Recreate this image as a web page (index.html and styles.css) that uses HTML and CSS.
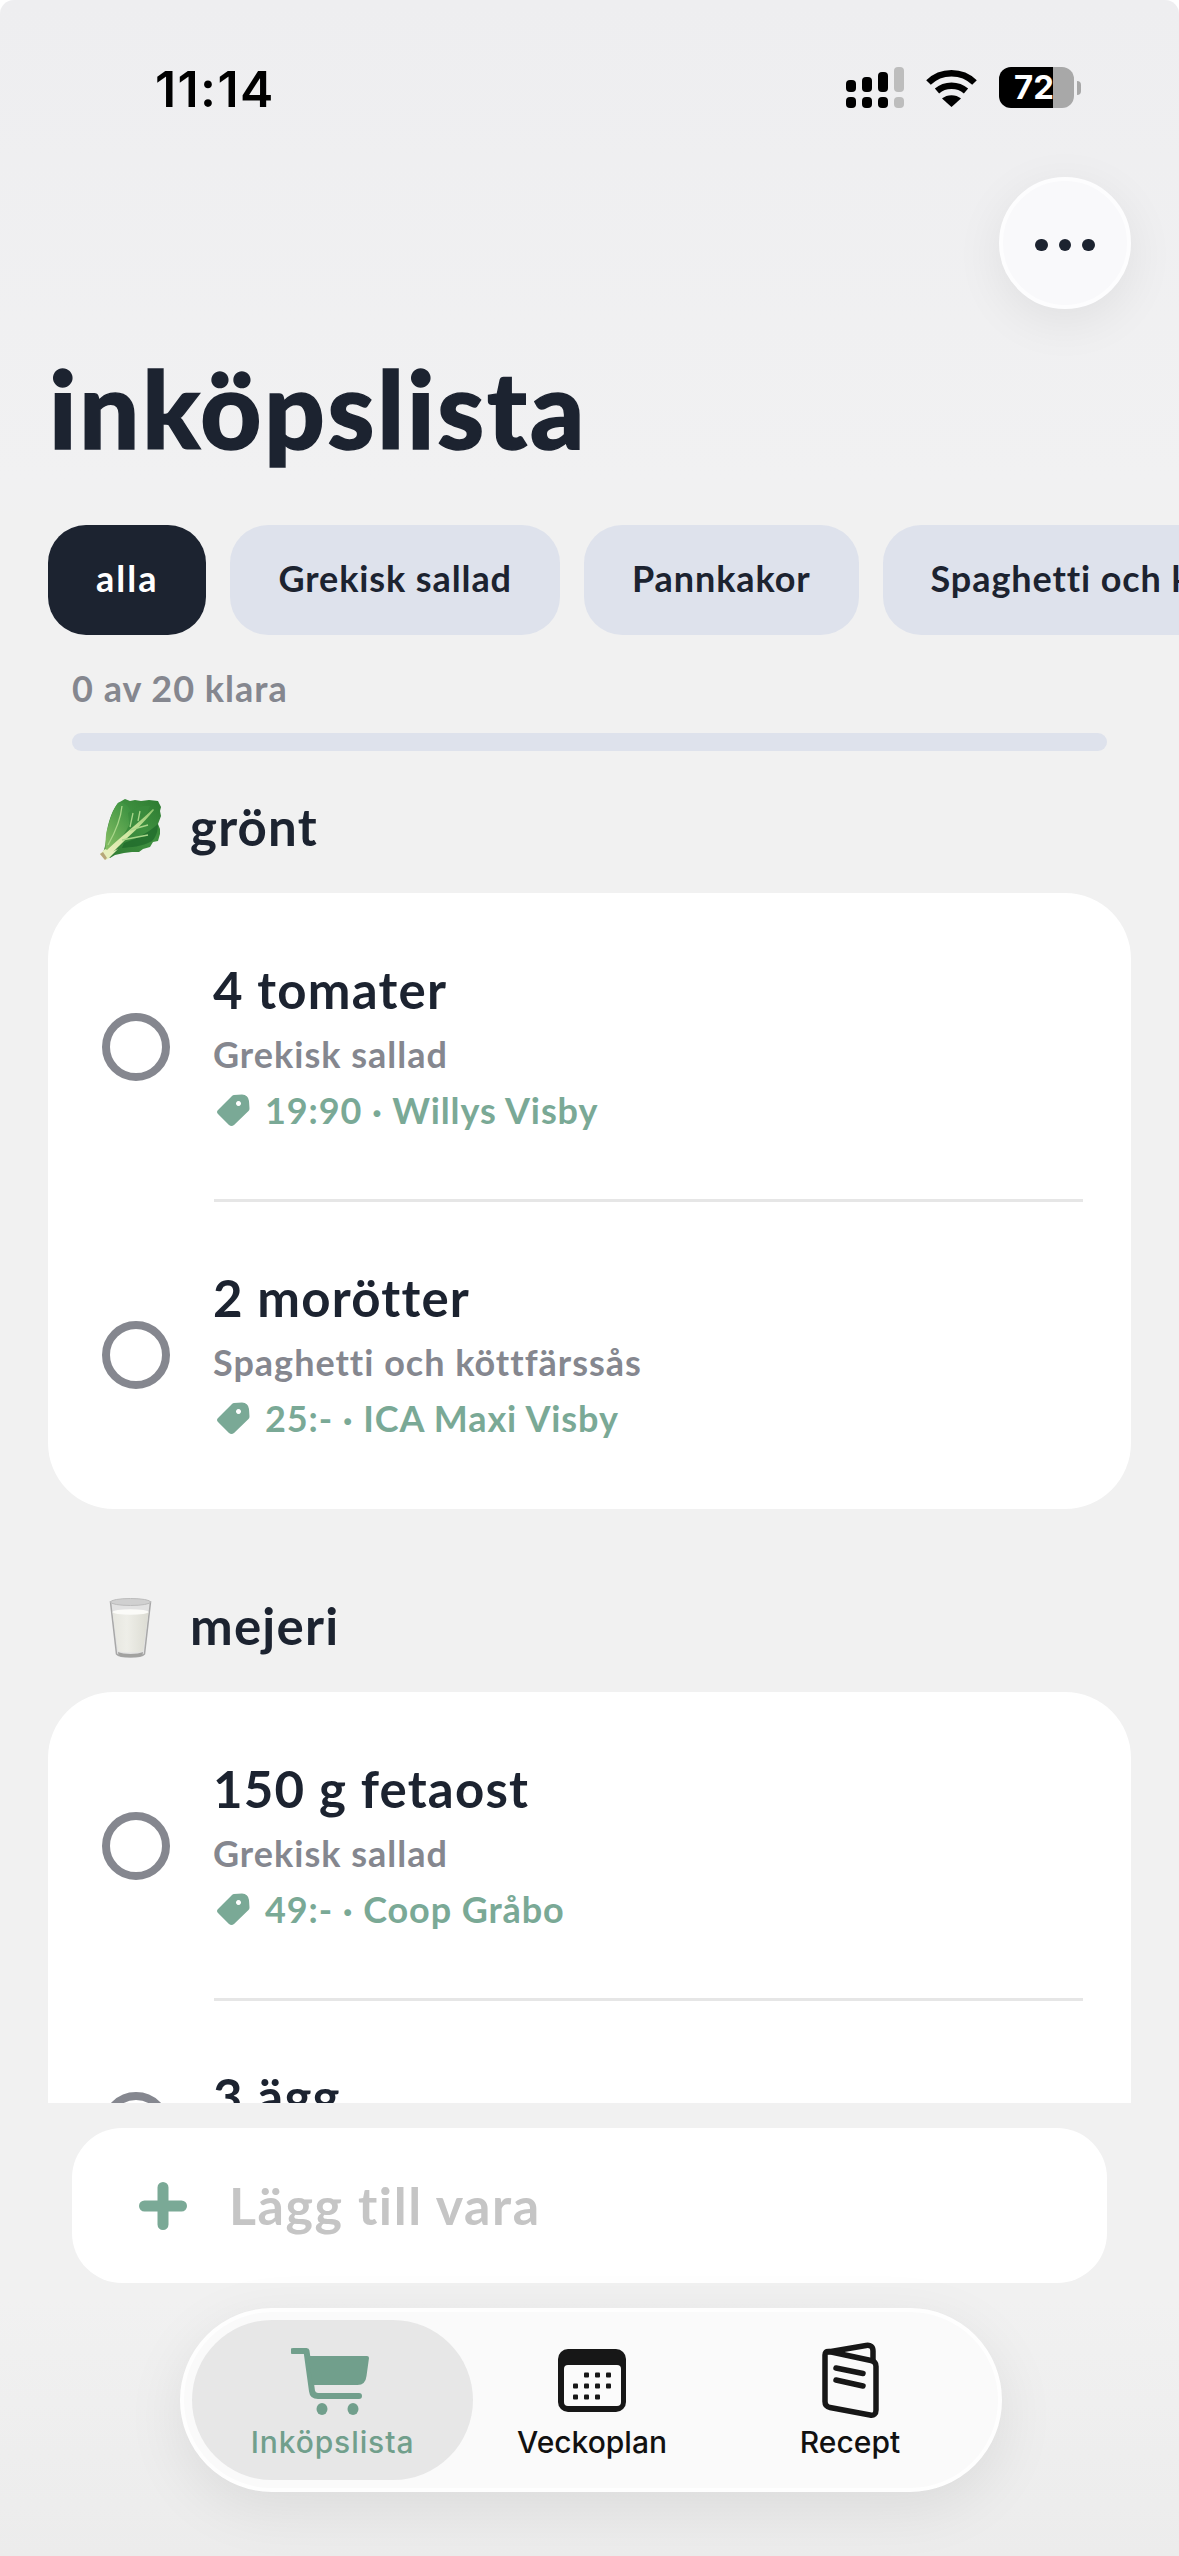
FILE: index.html
```html
<!DOCTYPE html>
<html lang="sv">
<head>
<meta charset="utf-8">
<title>inköpslista</title>
<link rel="stylesheet" href="styles.css">
</head>
<body>
<div class="screen">
  <svg width="0" height="0" class="defs">
    <defs>
      <symbol id="tag" viewBox="0 0 34 34"><path fill-rule="evenodd" d="M18 2L26 1.500Q32 1.500 33 8L33.500 15.500Q33.500 17 32.500 18L18 32Q15.500 34 13 32L2 21Q0 19 2 17L16 3Q17 2 18 2zM22.500 8.100a2.500 2.500 0 1 0 .01 0z" fill="#7aa996"/></symbol>
    </defs>
  </svg>
  <header class="status">
    <span class="time">11:14</span>
    <div class="status-icons">
      <svg class="signal" width="58" height="41" viewBox="0 0 58 41">
        <rect x="0" y="13" width="10" height="12" rx="4"/><rect x="16" y="10" width="10" height="15" rx="4"/><rect x="32" y="5" width="10" height="20" rx="4"/><rect x="48" y="0" width="10" height="25" rx="4" fill="#bdbdbd"/>
        <rect x="0" y="30" width="10" height="11" rx="4"/><rect x="16" y="30" width="10" height="11" rx="4"/><rect x="32" y="30" width="10" height="11" rx="4"/><rect x="48" y="30" width="10" height="11" rx="4" fill="#bdbdbd"/>
      </svg>
      <svg class="wifi" width="51" height="38" viewBox="0 0 51 38" fill="none" stroke="#000" stroke-width="6.500">
        <path d="M2.500 13.500C15 1 36 1 48.500 13.500"/><path d="M11 22c8-7 21-7 29 0"/>
        <path d="M25.500 38L16 29.500c5-4.500 14-4.500 19 0z" fill="#000" stroke="none"/>
      </svg>
      <div class="battery"><span class="battery-num">72</span></div>
      <span class="battery-nub"></span>
    </div>
  </header>
  <div class="top-action">
    <button class="more"><i></i><i></i><i></i></button>
  </div>
  <h1 class="title">inköpslista</h1>
  <nav class="chips">
    <span class="chip chip-on">alla</span>
    <span class="chip">Grekisk sallad</span>
    <span class="chip">Pannkakor</span>
    <span class="chip">Spaghetti och köttfärssås</span>
  </nav>
  <div class="progress">
    <p class="progress-text">0 av 20 klara</p>
    <div class="progress-bar"></div>
  </div>
  <main class="list">
    <section class="group">
      <h2 class="group-head">
        <svg class="emoji" width="62" height="62" viewBox="0 0 62 62">
          <defs>
            <linearGradient id="leafback" x1="0" y1="1" x2="1" y2="0"><stop offset="0" stop-color="#2f7a33"/><stop offset=".6" stop-color="#3f9140"/><stop offset="1" stop-color="#2c7a30"/></linearGradient>
            <linearGradient id="leaffront" x1="0" y1="1" x2=".7" y2="0"><stop offset="0" stop-color="#8cc267"/><stop offset="1" stop-color="#3f9442"/></linearGradient>
            <linearGradient id="leafstem" x1="0" y1="1" x2="1" y2="0"><stop offset="0" stop-color="#f0f0c4"/><stop offset=".5" stop-color="#cfe7a0"/><stop offset="1" stop-color="#8fc66f"/></linearGradient>
          </defs>
          <path d="M3 54C6 46 6 40 7 32 9 20 13 10 18 4L25 0l5 2 5-1 6 1 8-1 9 1 3 6-1 4 1 5-3 8 2 5 0 5-2 7-5 1-3 5-7 2-4 3-7 0-8 1-9 2-5 3z" fill="url(#leafback)"/>
          <path d="M18 4C24 2 30 8 31 15 32 24 25 36 12 50L5 54C6 44 5 34 8 28 10 19 14 9 18 4z" fill="url(#leaffront)"/>
          <path d="M28 14C36 8 44 6 50 7 46 18 40 26 30 30z" fill="#3a8c3d" opacity=".7"/>
          <path d="M24 44C34 40 46 36 58 25 58 32 56 38 52 42 42 48 30 48 22 49z" fill="#1f6a2b" opacity=".75"/>
          <path d="M4 54C16 42 36 26 53 10L54 11C42 26 28 38 18 48L8 58z" fill="url(#leafstem)"/>
          <path d="M22 7C21 18 17 30 8 46M30 28L33 14M38 22L40 12M30 31L48 26M22 41L48 36" stroke="#a9d68a" stroke-width="1.300" fill="none"/>
          <path d="M0 55L5 50 12 53 18 50 8 60 5 61z" fill="#e7efbd"/>
          <path d="M0 55L3 53 7 59 5 61z" fill="#b7a679"/>
        </svg>
        <span>grönt</span>
      </h2>
      <div class="card">
        <div class="item">
          <span class="check"></span>
          <div class="item-body">
            <div class="item-name">4 tomater</div>
            <div class="item-recipe">Grekisk sallad</div>
            <div class="item-price"><svg class="tag" width="34" height="34"><use href="#tag"/></svg>19:90 · Willys Visby</div>
          </div>
        </div>
        <div class="item">
          <span class="check"></span>
          <div class="item-body">
            <div class="item-name">2 morötter</div>
            <div class="item-recipe">Spaghetti och köttfärssås</div>
            <div class="item-price"><svg class="tag" width="34" height="34"><use href="#tag"/></svg>25:- · ICA Maxi Visby</div>
          </div>
        </div>
      </div>
    </section>
    <section class="group">
      <h2 class="group-head">
        <svg class="emoji" width="62" height="62" viewBox="0 0 62 62">
          <defs>
            <linearGradient id="milkg" x1="0" y1="0" x2="1" y2="0"><stop offset="0" stop-color="#e6e6df"/><stop offset=".4" stop-color="#eeeee8"/><stop offset="1" stop-color="#dcdcd3"/></linearGradient>
          </defs>
          <path d="M10.500 4L16.500 56C20 60 41 60 44.500 56L50.500 4z" fill="#e2e2e2" stroke="#a8a8a8" stroke-width="1.500"/>
          <ellipse cx="30.500" cy="4" rx="20" ry="3.500" fill="#d0d0d0" stroke="#bcbcbc"/>
          <path d="M12.500 14L18 53C23 55 38 55 43 53L48.500 14z" fill="url(#milkg)"/>
          <ellipse cx="30.500" cy="14" rx="18" ry="2.800" fill="#fbfbf8"/>
          <path d="M18 54C23 56.500 38 56.500 43 54L42.500 57.500C38 59.500 23 59.500 18.500 57.500z" fill="#a2a2a0"/>
        </svg>
        <span>mejeri</span>
      </h2>
      <div class="card">
        <div class="item">
          <span class="check"></span>
          <div class="item-body">
            <div class="item-name">150 g fetaost</div>
            <div class="item-recipe">Grekisk sallad</div>
            <div class="item-price"><svg class="tag" width="34" height="34"><use href="#tag"/></svg>49:- · Coop Gråbo</div>
          </div>
        </div>
        <div class="item">
          <span class="check"></span>
          <div class="item-body item-body-short">
            <div class="item-name">3 ägg</div>
          </div>
        </div>
      </div>
    </section>
  </main>
  <div class="add">
    <svg class="add-plus" width="48" height="48" viewBox="0 0 48 48"><path d="M24 5.500v37M5.500 24h37" stroke="#7aa996" stroke-width="11" stroke-linecap="round"/></svg>
    <span class="add-text">Lägg till vara</span>
  </div>
  <div class="tabbar">
    <nav class="tabs">
      <a class="tab tab-on">
        <span class="tab-art tab-art-cart">
          <svg width="78" height="68" viewBox="0 0 78 68">
            <path d="M2 4h13.500L21 44q.6 5 6 5h41" fill="none" stroke="#719f8c" stroke-width="6" stroke-linecap="round" stroke-linejoin="round"/>
            <path d="M17 9h59q2 0 2 2l-2.500 18q-1 9-9 9H22z" fill="#719f8c"/>
            <ellipse cx="31" cy="62" rx="5.500" ry="6" fill="#719f8c"/><ellipse cx="62" cy="62" rx="5.500" ry="6" fill="#719f8c"/>
          </svg>
        </span>
        <span>Inköpslista</span>
      </a>
      <a class="tab">
        <span class="tab-art">
          <svg width="68" height="63" viewBox="0 0 68 63">
            <rect width="68" height="63" rx="10" fill="#171717"/>
            <rect x="6" y="16" width="57" height="41" rx="4" fill="#fbfbfb"/>
            <g fill="#171717"><rect x="26" y="23.500" width="5" height="5" rx="1"/><rect x="37" y="23.500" width="5" height="5" rx="1"/><rect x="48" y="23.500" width="5" height="5" rx="1"/><rect x="15" y="34.500" width="5" height="5" rx="1"/><rect x="26" y="34.500" width="5" height="5" rx="1"/><rect x="37" y="34.500" width="5" height="5" rx="1"/><rect x="48" y="34.500" width="5" height="5" rx="1"/><rect x="15" y="45.500" width="5" height="5" rx="1"/><rect x="26" y="45.500" width="5" height="5" rx="1"/><rect x="37" y="45.500" width="5" height="5" rx="1"/></g>
          </svg>
        </span>
        <span>Veckoplan</span>
      </a>
      <a class="tab">
        <span class="tab-art">
          <svg width="57" height="77" viewBox="0 0 57 77" fill="none" stroke="#171717" stroke-width="5.500" stroke-linecap="round" stroke-linejoin="round">
            <path d="M6 10L44 3.500q7-1 7 5.500v9"/>
            <path d="M7 9.500L49 18.500q5 1 5 6V68q0 6-6 5L8 65.500q-5-1-5-6V13q0-4 4-3.500z"/>
            <path d="M14 26l27 5.500M14 38l27 6"/>
          </svg>
        </span>
        <span>Recept</span>
      </a>
    </nav>
  </div>
</div>
</body>
</html>
```

FILE: styles.css
```css
* { box-sizing: border-box; }
html, body { margin: 0; padding: 0; }
body { width: 1179px; height: 2556px; overflow: hidden; background: #fff; font-family: "Lato", "Noto Sans", sans-serif; color: #1c2330; }
.defs { position: absolute; }
.screen { width: 1179px; height: 2556px; display: flex; flex-direction: column; overflow: hidden; border-radius: 14px 14px 0 0; background: linear-gradient(#eeeef0 0, #f1f1f2 480px, #f1f1f1 520px, #f1f1f1 2300px, #ececec 2556px); }

.status { height: 177px; flex: none; display: flex; justify-content: space-between; padding: 65px 98px 0 155px; }
.time { font-family: "Inter", sans-serif; font-weight: 600; font-size: 50px; line-height: 48px; letter-spacing: 1.400px; color: #000; }
.status-icons { display: flex; align-items: flex-start; height: 41px; margin-top: 2px; }
.signal { margin: 0 22px 0 -9px; }
.wifi { margin: 2px 22px 0 0; }
.battery { width: 75px; height: 41px; border-radius: 12px; background: linear-gradient(90deg, #000 54px, #a8a8a8 54px); display: flex; align-items: center; padding-left: 15px; }
.battery-num { font-family: "Inter", sans-serif; font-weight: 700; font-size: 33px; line-height: 41px; color: #fff; }
.battery-nub { width: 4px; height: 14px; margin: 14px 0 0 3px; border-radius: 0 7px 7px 0; background: #a8a8a8; }

.top-action { flex: none; display: flex; justify-content: flex-end; padding-right: 48px; height: 132px; }
.more { width: 132px; height: 132px; border-radius: 50%; border: 4px solid #fdfdfe; background: #f9f9fb; box-shadow: 0 12px 50px rgba(0,0,0,.07); display: flex; align-items: center; justify-content: center; gap: 11px; padding: 4px 0 0; }
.more i { width: 12.500px; height: 12.500px; border-radius: 50%; background: #1c2330; }

.title { flex: none; margin: 39px 0 0 49px; height: 177px; font-size: 106px; line-height: 120px; font-weight: 900; letter-spacing: 2.800px; color: #1c2330; -webkit-text-stroke: 1.500px #1c2330; }

.chips { flex: none; display: flex; gap: 24px; padding-left: 48px; height: 110px; white-space: nowrap; }
.chip { flex: none; height: 110px; padding: 0 48px; border-radius: 38px; background: #dee2ec; font-size: 36px; line-height: 106px; font-weight: 700; letter-spacing: .9px; color: #1c2330; }
.chip-on { background: #1c2330; color: #fff; letter-spacing: 2px; }

.progress { flex: none; padding: 31px 72px 0; height: 152px; }
.progress-text { margin: 0; font-size: 36px; line-height: 44px; font-weight: 700; letter-spacing: 1px; color: #85878f; }
.progress-bar { margin-top: 23px; height: 18px; border-radius: 9px; background: #dee2ec; }

.list { flex: 1 1 0; min-height: 0; overflow: hidden; padding: 0 48px; }
.group { padding-bottom: 77px; }
.group-head { display: flex; align-items: flex-start; gap: 28px; margin: 0; padding: 12px 0 0 52px; height: 106px; font-size: 51px; line-height: 56px; font-weight: 700; letter-spacing: 1.200px; color: #1c2330; }
.card { background: #fff; border-radius: 66px; padding: 0 48px 0 54px; }
.item { position: relative; display: flex; align-items: center; gap: 43px; padding: 67px 0; }
.item + .item::before { content: ""; position: absolute; left: 112px; right: 0; top: -2px; height: 3px; background: #e6e6e6; }
.check { flex: none; width: 68px; height: 68px; border-radius: 50%; border: 8px solid #85878f; }
.item-body { flex: 1; min-width: 0; }
.item-body-short { min-height: 118px; }
.item-name { font-size: 51px; line-height: 60px; font-weight: 700; letter-spacing: 1.200px; color: #1c2330; }
.item-recipe { font-size: 36px; line-height: 48px; margin-top: 10px; font-weight: 700; letter-spacing: 1px; color: #85878f; }
.item-price { display: flex; align-items: center; gap: 18px; font-size: 36px; line-height: 48px; margin-top: 8px; font-weight: 700; letter-spacing: .9px; color: #7aa996; }
.tag { flex: none; margin-left: 3px; margin-right: -3px; }

.add { flex: none; margin: 25px 72px 0; height: 155px; border-radius: 50px; background: #fff; display: flex; align-items: center; gap: 42px; padding-left: 67px; }
.add-text { font-size: 52px; line-height: 60px; margin-top: -2px; font-weight: 700; letter-spacing: 1.600px; color: #c5c5c5; }

.tabbar { flex: none; display: flex; justify-content: center; padding-top: 25px; height: 273px; }
.tabs { width: 822px; height: 184px; margin-left: 3px; padding: 8px 9px 8px 8px; border-radius: 92px; background: #fafafa; border: 4px solid #fefefe; box-shadow: 0 16px 60px rgba(0,0,0,.08); display: grid; grid-template-columns: 281px 238px 278px; }
.tab { display: flex; flex-direction: column; align-items: center; border-radius: 80px; font-family: "Inter", sans-serif; font-size: 30px; line-height: 36px; font-weight: 500; color: #111; height: 160px; padding-top: 20px; }
.tab-on { background: #e7e7e7; color: #719f8c; letter-spacing: .9px; }
.tab-art { height: 80px; margin-bottom: 4px; display: flex; align-items: center; justify-content: center; }
.tab-art-cart { margin-right: 5px; padding-top: 2px; }
```
